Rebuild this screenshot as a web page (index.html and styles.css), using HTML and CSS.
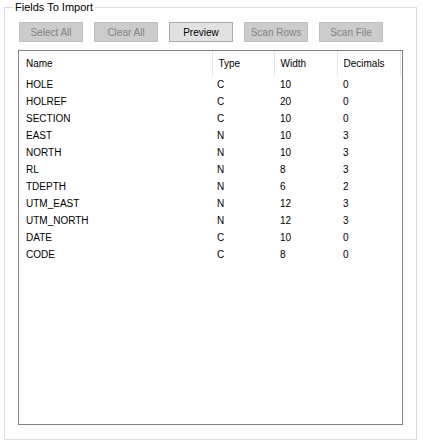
FILE: index.html
```html
<!DOCTYPE html>
<html lang="en">
  <head>
    <meta charset="UTF-8" />
    <title>Fields To Import</title>
    <link rel="stylesheet" href="styles.css">
  </head>
  <body>
    <fieldset class="group">
      <legend class="group__title">Fields To Import</legend>

      <div class="toolbar">
        <button class="btn" disabled>Select All</button>
        <button class="btn" disabled>Clear All</button>
        <button class="btn btn--active">Preview</button>
        <button class="btn" disabled>Scan Rows</button>
        <button class="btn" disabled>Scan File</button>
      </div>

      <div class="fields">
        <table class="fields__table">
          <colgroup>
            <col class="col-name">
            <col class="col-type">
            <col class="col-width">
            <col class="col-dec">
          </colgroup>
          <thead>
            <tr>
              <th>Name</th>
              <th>Type</th>
              <th>Width</th>
              <th>Decimals</th>
            </tr>
          </thead>
          <tbody>
            <tr><td>HOLE</td><td>C</td><td>10</td><td>0</td></tr>
            <tr><td>HOLREF</td><td>C</td><td>20</td><td>0</td></tr>
            <tr><td>SECTION</td><td>C</td><td>10</td><td>0</td></tr>
            <tr><td>EAST</td><td>N</td><td>10</td><td>3</td></tr>
            <tr><td>NORTH</td><td>N</td><td>10</td><td>3</td></tr>
            <tr><td>RL</td><td>N</td><td>8</td><td>3</td></tr>
            <tr><td>TDEPTH</td><td>N</td><td>6</td><td>2</td></tr>
            <tr><td>UTM_EAST</td><td>N</td><td>12</td><td>3</td></tr>
            <tr><td>UTM_NORTH</td><td>N</td><td>12</td><td>3</td></tr>
            <tr><td>DATE</td><td>C</td><td>10</td><td>0</td></tr>
            <tr><td>CODE</td><td>C</td><td>8</td><td>0</td></tr>
          </tbody>
        </table>
      </div>
    </fieldset>
  </body>
</html>
```

FILE: styles.css
```css
body {
  margin: 0;
  background: #ffffff;
  font-family: "Liberation Sans", Arial, sans-serif;
  font-size: 10px;
  color: #000000;
}

/* group box */
.group {
  margin: 1px 0 0 4px;
  width: 413px;
  height: 439px;
  box-sizing: border-box;
  border: 1px solid #dcdcdc;
  padding: 8px 13px 14px 13px;
}
.group__title {
  margin-left: -5px;
  padding: 0 2px;
  font-size: 11px;
  line-height: 13px;
}

/* buttons */
.toolbar {
  display: flex;
  gap: 11px;
  padding-left: 1px;
  margin-bottom: 8px;
}
.btn {
  width: 64px;
  height: 20px;
  margin: 0;
  padding: 0;
  box-sizing: border-box;
  font-family: "Liberation Sans", Arial, sans-serif;
  font-size: 10px;
  color: #838383;
  background: #cccccc;
  border: 1px solid #bfbfbf;
}
.btn--active {
  color: #000000;
  background: #e1e1e1;
  border-color: #adadad;
}

/* list view */
.fields {
  height: 375px;
  box-sizing: border-box;
  border: 1px solid #828282;
}
.fields__table {
  border-collapse: collapse;
  table-layout: fixed;
}
.col-name { width: 193px; }
.col-type { width: 62px; }
.col-width { width: 63px; }
.col-dec { width: 63px; }

.fields__table th {
  height: 25px;
  padding: 0 0 0 6px;
  font-weight: normal;
  text-align: left;
  vertical-align: middle;
  border-right: 1px solid #e5e5e5;
}
.fields__table th:first-child { padding-left: 7px; }
.fields__table td {
  height: 17px;
  padding: 0 0 0 6px;
  line-height: 17px;
  white-space: nowrap;
}
.fields__table td:first-child { padding-left: 7px; }
.fields__table td:nth-child(2) { padding-left: 5px; }
```
